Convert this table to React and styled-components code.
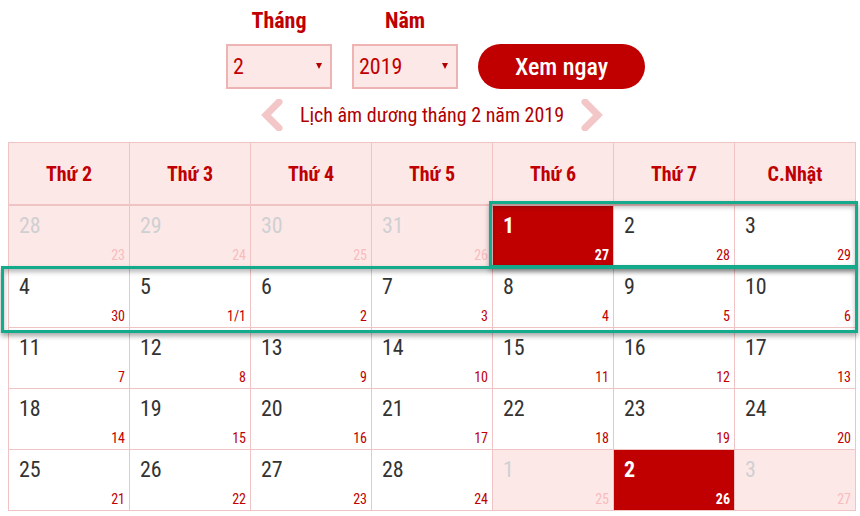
import React from "react";
import styled, { createGlobalStyle } from "styled-components";

const FONT = `"Roboto Condensed", "Liberation Sans Narrow", "DejaVu Sans Condensed", Roboto, sans-serif`;

const GlobalStyle = createGlobalStyle`
  html, body { margin: 0; padding: 0; background: #fff; }
  body { font-family: ${FONT}; }
`;

const Page = styled.div`
  width: 848px;
  padding: 0 0 0 8px;
`;

const Controls = styled.div`
  display: flex;
  justify-content: center;
  align-items: flex-end;
  gap: 20px;
  padding-top: 8px;
  margin-left: 7px;
`;

const Field = styled.div`
  display: flex;
  flex-direction: column;
  align-items: center;
  gap: 10px;
`;

const Label = styled.div`
  font-size: 22px;
  line-height: 26px;
  font-weight: 700;
  color: #c00000;
`;

const Select = styled.div`
  box-sizing: border-box;
  width: 106px;
  height: 45px;
  border: 2px solid #eeb3b3;
  background: #fde8e8;
  color: #c00000;
  font-size: 22px;
  display: flex;
  align-items: center;
  justify-content: space-between;
  padding: 0 8px 0 5px;
`;

const Caret = styled.span`
  width: 0;
  height: 0;
  border-left: 3px solid transparent;
  border-right: 3px solid transparent;
  border-top: 6px solid #b00000;
  margin-bottom: 2px;
`;

const Button = styled.div`
  box-sizing: border-box;
  width: 167px;
  height: 45px;
  border-radius: 23px;
  background: #c00000;
  color: #fff;
  font-size: 24px;
  font-weight: 500;
  display: flex;
  align-items: center;
  justify-content: center;
`;

const Nav = styled.div`
  display: flex;
  justify-content: center;
  align-items: center;
  gap: 16px;
  height: 32px;
  margin-top: 10px;
  margin-bottom: 11px;
`;

const NavTitle = styled.div`
  font-size: 20px;
  color: #b00000;
`;

const Chevron = ({ dir }) => (
  <svg width="24" height="32" viewBox="0 0 24 32">
    <path
      d={dir === "left" ? "M19 3 L6 16 L19 29" : "M5 3 L18 16 L5 29"}
      fill="none"
      stroke="#f3c7c7"
      strokeWidth="7"
      strokeLinecap="round"
      strokeLinejoin="miter"
    />
  </svg>
);

const TableWrap = styled.div`
  position: relative;
  width: 848px;
`;

const Grid = styled.div`
  display: grid;
  grid-template-columns: repeat(7, 121px);
  border-top: 1px solid #f0c4c4;
  border-left: 1px solid #f0c4c4;
`;

const HeadCell = styled.div`
  box-sizing: border-box;
  height: 63px;
  border-right: 1px solid #f0c4c4;
  border-bottom: 2px solid #f0c4c4;
  background: #fde8e8;
  color: #c00000;
  font-size: 20px;
  font-weight: 700;
  display: flex;
  align-items: center;
  justify-content: center;
`;

const Cell = styled.div`
  box-sizing: border-box;
  height: 61px;
  border-right: 1px solid #f0c4c4;
  border-bottom: 1px solid #f0c4c4;
  background: ${(p) => (p.$active ? "#c00000" : p.$other ? "#fde8e8" : "#fff")};
  display: flex;
  flex-direction: column;
  justify-content: space-between;
  padding: 7px 4px 3px 10px;
`;

const Day = styled.div`
  font-size: 22px;
  line-height: 26px;
  font-weight: ${(p) => (p.$active ? 700 : 400)};
  color: ${(p) => (p.$active ? "#fff" : p.$other ? "#cfd0d2" : "#333")};
`;

const Lunar = styled.div`
  align-self: flex-end;
  font-size: 14px;
  line-height: 16px;
  font-weight: ${(p) => (p.$active ? 700 : 400)};
  color: ${(p) => (p.$active ? "#fff" : p.$other ? "#f8bcbc" : "#c00000")};
`;

const Marker = styled.div`
  position: absolute;
  box-sizing: border-box;
  border: 3px solid #14ab8c;
  box-shadow: 0 3px 5px rgba(0, 0, 0, 0.35), inset 0 3px 5px rgba(0, 0, 0, 0.28);
  pointer-events: none;
`;

const heads = ["Thứ 2", "Thứ 3", "Thứ 4", "Thứ 5", "Thứ 6", "Thứ 7", "C.Nhật"];

const rows = [
  [[28, 23, "o"], [29, 24, "o"], [30, 25, "o"], [31, 26, "o"], [1, 27, "a"], [2, 28], [3, 29]],
  [[4, 30], [5, "1/1"], [6, 2], [7, 3], [8, 4], [9, 5], [10, 6]],
  [[11, 7], [12, 8], [13, 9], [14, 10], [15, 11], [16, 12], [17, 13]],
  [[18, 14], [19, 15], [20, 16], [21, 17], [22, 18], [23, 19], [24, 20]],
  [[25, 21], [26, 22], [27, 23], [28, 24], [1, 25, "o"], [2, 26, "a"], [3, 27, "o"]],
];

export default function App() {
  return (
    <>
      <GlobalStyle />
      <Page>
        <Controls>
          <Field>
            <Label>Tháng</Label>
            <Select>
              <span>2</span>
              <Caret />
            </Select>
          </Field>
          <Field>
            <Label>Năm</Label>
            <Select>
              <span>2019</span>
              <Caret />
            </Select>
          </Field>
          <Button>Xem ngay</Button>
        </Controls>
        <Nav>
          <Chevron dir="left" />
          <NavTitle>Lịch âm dương tháng 2 năm 2019</NavTitle>
          <Chevron dir="right" />
        </Nav>
        <TableWrap>
          <Grid>
            {heads.map((h) => (
              <HeadCell key={h}>{h}</HeadCell>
            ))}
            {rows.flat().map(([d, l, k], i) => {
              const other = k === "o";
              const active = k === "a";
              return (
                <Cell key={i} $other={other} $active={active}>
                  <Day $other={other} $active={active}>{d}</Day>
                  <Lunar $other={other} $active={active}>{l}</Lunar>
                </Cell>
              );
            })}
          </Grid>
          <Marker style={{ left: 481, top: 59, width: 369, height: 67 }} />
          <Marker style={{ left: -7, top: 124, width: 857, height: 67 }} />
        </TableWrap>
      </Page>
    </>
  );
}
